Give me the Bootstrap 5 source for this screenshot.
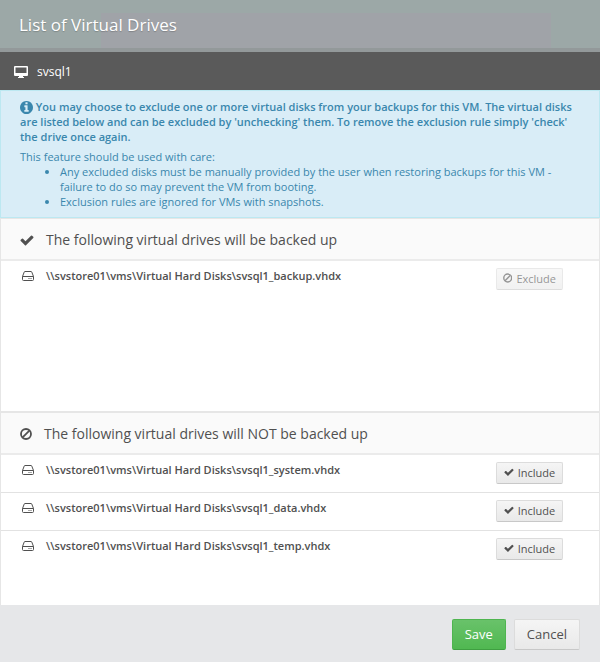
<!DOCTYPE html>
<html lang="en">
<head>
<meta charset="utf-8">
<meta name="viewport" content="width=device-width, initial-scale=1">
<title>List of Virtual Drives</title>
<link href="https://cdn.jsdelivr.net/npm/bootstrap@5.3.0/dist/css/bootstrap.min.css" rel="stylesheet">
<style>
  body { font-family: "Open Sans", sans-serif; font-size: 11px; line-height: 15px; color: #505050; background: #e6e7e9; }
  .dialog-title { background: linear-gradient(#a0a3a8, #a0a3a8) 67% 100% / 75% 35px no-repeat #9ca8a7; background-clip: padding-box; border-bottom: 4px solid #93999a; color: #fff; padding: 13px 19px 11px; }
  .dialog-title h1 { font-size: 17px; line-height: 24px; text-shadow: 0 1px 1px rgba(0,0,0,.2); font-weight: 400; }
  .vm-bar { background: #5a5a5a; color: #fff; font-size: 12px; line-height: 18px; padding: 11px 14px 9px; gap: 9px; font-weight: 500; }
  .notice { background: #d9edf7; border: 1px solid #bce8f1; color: #3a87ad; padding: 8px 19px; }
  .notice p { margin: 0 0 5px; font-weight: 600; }
  .notice svg { margin-top: -2px; }
  .notice ul { padding-left: 40px; }
  .section-head { background: #fafafa; border-bottom: 2px solid #ebebeb; padding: 11px 19px 9px; color: #505050; }
  .section-head h2 { font-size: 14px; line-height: 20px; font-weight: 400; }
  .drives { border: solid #e6e6e6; border-width: 1px 1px 0; background: #fff; }
  .drives + .drives { border-top-width: 2px; }
  .drive-list { min-height: 150px; }
  .drive-list li { padding: 7px 36px 8px 20px; gap: 11px; font-weight: 600; }
  .drive-list li > svg { margin-top: 2px; }
  .drive-list li + li { border-top: 1px solid #e2e2e2; }
  .btn-mini, .btn-plain, .btn-save { border-radius: 2px; font-weight: 400; }
  .btn-mini { font-size: 11px; line-height: 15px; padding: 2px 6px 4px; width: 67px; height: 22px; }
  .btn-mini, .btn-plain, .btn-mini:disabled { color: #505050; background: linear-gradient(#f5f5f5, #e9e9e9); border: 1px solid #dcdcdc; border-bottom-color: #c8c8c8; }
  .btn-mini:disabled { opacity: .6; }
  .btn-plain, .btn-save { font-size: 13px; line-height: 19px; padding: 5px 12px; }
  .btn-save { color: #fff; background: linear-gradient(#69c26a, #50b851); border: 1px solid #4fb550; border-bottom-color: #3f9f41; }
  .dialog-actions { padding: 14px 20px 12px; gap: 8px; background: #e6e7e9; }
</style>
<script src="https://cdn.jsdelivr.net/npm/bootstrap@5.3.0/dist/js/bootstrap.bundle.min.js"></script>
</head>
<body>
<svg class="d-none" aria-hidden="true">
  <symbol id="i-check" viewBox="60 180 1672 1400"><path fill="currentColor" d="M1671 566q0 40-28 68l-724 724-136 136q-28 28-68 28t-68-28l-136-136-362-362q-28-28-28-68t28-68l136-136q28-28 68-28t68 28l294 295 656-657q28-28 68-28t68 28l136 136q28 28 28 68z"/></symbol>
  <symbol id="i-ban" viewBox="0 0 12 12"><g fill="none" stroke="currentColor" stroke-width="1.8"><circle cx="6" cy="6" r="5"/><path d="M2.6 9.4l6.8-6.8"/></g></symbol>
  <symbol id="i-info" viewBox="128 128 1536 1536"><path fill="currentColor" d="M1152 1376v-160q0-14-9-23t-23-9h-96v-512q0-14-9-23t-23-9h-320q-14 0-23 9t-9 23v160q0 14 9 23t23 9h96v320h-96q-14 0-23 9t-9 23v160q0 14 9 23t23 9h448q14 0 23-9t9-23zm-128-896v-160q0-14-9-23t-23-9h-192q-14 0-23 9t-9 23v160q0 14 9 23t23 9h192q14 0 23-9t9-23zm640 416q0 209-103 385.5t-279.5 279.5-385.5 103-385.5-103-279.5-279.5-103-385.5 103-385.5 279.5-279.5 385.5-103 385.5 103 279.5 279.5 103 385.5z"/></symbol>
  <symbol id="i-disk" viewBox="0 0 14 12"><path fill="none" stroke="currentColor" d="M1.5 6.5L3.2 2.1Q3.4 1.5 4 1.5h6q.6 0 .8.6l1.700 4.400v3q0 1-1 1h-9q-1 0-1-1zh11M7.500 8.500h1M9.500 8.500h1"/></symbol>
  <symbol id="i-screen" viewBox="0 0 14 12"><path fill="currentColor" fill-rule="evenodd" d="M1 0h12q1 0 1 1v8q0 1-1 1H9v1h1v1H4v-1h1v-1H1q-1 0-1-1V1q0-1 1-1zm.5 1.500v5.500h11v-5.500z"/></symbol>
</svg>

<main class="d-flex flex-column">
  <header class="dialog-title"><h1 class="m-0">List of Virtual Drives</h1></header>
  <div class="vm-bar d-flex align-items-center"><svg width="14" height="12"><use href="#i-screen"/></svg><span>svsql1</span></div>

  <div class="notice">
    <p><svg width="13" height="13" aria-hidden="true"><use href="#i-info"/></svg> You may choose to exclude one or more virtual disks from your backups for this VM. The virtual disks are listed below and can be excluded by 'unchecking' them. To remove the exclusion rule simply 'check' the drive once again.</p>
    <div>This feature should be used with care:</div>
    <ul class="mb-0">
      <li>Any excluded disks must be manually provided by the user when restoring backups for this VM - failure to do so may prevent the VM from booting.</li>
      <li>Exclusion rules are ignored for VMs with snapshots.</li>
    </ul>
  </div>

  <section class="drives">
    <div class="section-head d-flex align-items-center"><svg class="me-2" width="14" height="12"><use href="#i-check"/></svg><h2 class="m-0 ms-1">The following virtual drives will be backed up</h2></div>
    <ul class="drive-list list-unstyled m-0">
      <li class="d-flex align-items-start"><svg class="flex-shrink-0" width="14" height="12"><use href="#i-disk"/></svg><span class="flex-grow-1">\\svstore01\vms\Virtual Hard Disks\svsql1_backup.vhdx</span><button type="button" class="btn btn-mini d-flex align-items-center justify-content-center gap-1" disabled><svg width="10" height="10"><use href="#i-ban"/></svg>Exclude</button></li>
    </ul>
  </section>

  <section class="drives">
    <div class="section-head d-flex align-items-center"><svg class="me-2" width="12" height="12"><use href="#i-ban"/></svg><h2 class="m-0 ms-1">The following virtual drives will NOT be backed up</h2></div>
    <ul class="drive-list list-unstyled m-0">
      <li class="d-flex align-items-start"><svg class="flex-shrink-0" width="14" height="12"><use href="#i-disk"/></svg><span class="flex-grow-1">\\svstore01\vms\Virtual Hard Disks\svsql1_system.vhdx</span><button type="button" class="btn btn-mini d-flex align-items-center justify-content-center gap-1"><svg width="10" height="10"><use href="#i-check"/></svg>Include</button></li>
      <li class="d-flex align-items-start"><svg class="flex-shrink-0" width="14" height="12"><use href="#i-disk"/></svg><span class="flex-grow-1">\\svstore01\vms\Virtual Hard Disks\svsql1_data.vhdx</span><button type="button" class="btn btn-mini d-flex align-items-center justify-content-center gap-1"><svg width="10" height="10"><use href="#i-check"/></svg>Include</button></li>
      <li class="d-flex align-items-start"><svg class="flex-shrink-0" width="14" height="12"><use href="#i-disk"/></svg><span class="flex-grow-1">\\svstore01\vms\Virtual Hard Disks\svsql1_temp.vhdx</span><button type="button" class="btn btn-mini d-flex align-items-center justify-content-center gap-1"><svg width="10" height="10"><use href="#i-check"/></svg>Include</button></li>
    </ul>
  </section>

  <footer class="dialog-actions d-flex justify-content-end">
    <button type="button" class="btn btn-save">Save</button>
    <button type="button" class="btn btn-plain">Cancel</button>
  </footer>
</main>
</body>
</html>
